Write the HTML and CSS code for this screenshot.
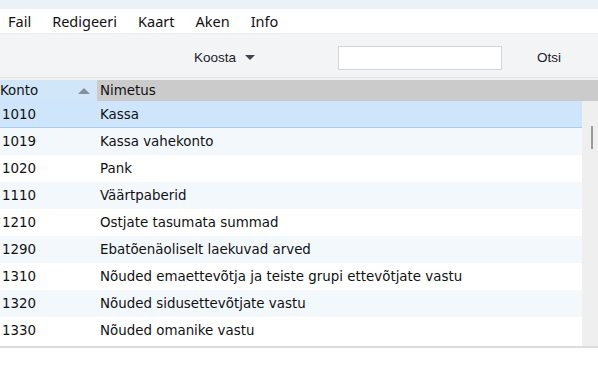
FILE: index.html
```html
<!DOCTYPE html>
<html lang="et">
<head>
  <meta charset="UTF-8">
  <title>Kontoplaan</title>
  <link rel="stylesheet" href="styles.css">
</head>
<body>
  <div class="topband"></div>
  <nav class="menubar">
    <span>Fail</span>
    <span>Redigeeri</span>
    <span>Kaart</span>
    <span>Aken</span>
    <span>Info</span>
  </nav>

  <div class="toolbar">
    <div class="koosta">Koosta <span class="caret"></span></div>
    <input type="text" class="search">
    <div class="otsi">Otsi</div>
  </div>

  <div class="table">
    <div class="thead">
      <div class="th-konto">Konto <span class="sort"></span></div>
      <div class="th-name">Nimetus</div>
    </div>
    <div class="tbody">
      <div class="rows">
        <div class="row selected"><span class="code">1010</span><span class="name">Kassa</span></div>
        <div class="row alt"><span class="code">1019</span><span class="name">Kassa vahekonto</span></div>
        <div class="row"><span class="code">1020</span><span class="name">Pank</span></div>
        <div class="row alt"><span class="code">1110</span><span class="name">Väärtpaberid</span></div>
        <div class="row"><span class="code">1210</span><span class="name">Ostjate tasumata summad</span></div>
        <div class="row alt"><span class="code">1290</span><span class="name">Ebatõenäoliselt laekuvad arved</span></div>
        <div class="row"><span class="code">1310</span><span class="name">Nõuded emaettevõtja ja teiste grupi ettevõtjate vastu</span></div>
        <div class="row alt"><span class="code">1320</span><span class="name">Nõuded sidusettevõtjate vastu</span></div>
        <div class="row"><span class="code">1330</span><span class="name">Nõuded omanike vastu</span></div>
      </div>
      <div class="scrollbar"><div class="thumb"></div></div>
    </div>
  </div>
</body>
</html>
```

FILE: styles.css
```css
body {
  margin: 0;
  padding: 0;
  background: #fff;
  font-family: "DejaVu Sans", sans-serif;
  color: #111;
  overflow: hidden;
}
.topband {
  height: 9px;
  background: #eaf2f8;
}
.menubar {
  height: 24px;
  display: flex;
  align-items: center;
  padding-left: 8px;
  font-family: "Noto Sans", sans-serif;
  font-size: 14.5px;
  color: #111;
}
.menubar span {
  margin-right: 21px;
}
.toolbar {
  height: 45px;
  padding-top: 4px;
  display: flex;
  align-items: center;
  box-sizing: border-box;
  background: #f3f4f6;
  border-top: 1px solid #eceef0;
  border-bottom: 1px solid #e2e3e5;
  font-family: "Liberation Sans", Arial, sans-serif;
  font-size: 13.5px;
  color: #1a1a2a;
}
.koosta {
  margin-left: 194px;
  display: flex;
  align-items: center;
}
.caret {
  display: inline-block;
  margin-left: 9px;
  border-left: 5px solid transparent;
  border-right: 5px solid transparent;
  border-top: 5px solid #3c4450;
}
.search {
  margin-left: 83px;
  width: 164px;
  height: 24px;
  box-sizing: border-box;
  border: 1px solid #d4d4d4;
  background: #fff;
  padding: 0;
}
.otsi {
  margin-left: 35px;
}
.table {
  border-top: 2px solid #f2f2f2;
  border-bottom: 2px solid #dcdcdc;
  font-size: 13.4px;
}
.thead {
  display: flex;
  height: 21px;
  line-height: 21px;
}
.th-konto {
  width: 97px;
  background: #d2e6fa;
  display: flex;
  justify-content: space-between;
  align-items: center;
  padding-right: 7px;
  box-sizing: border-box;
}
.sort {
  border-left: 6px solid transparent;
  border-right: 6px solid transparent;
  border-bottom: 6px solid #8a8f96;
}
.th-name {
  flex: 1;
  background: #cbcbcb;
  padding-left: 3px;
}
.tbody {
  display: flex;
  height: 245px;
}
.rows {
  flex: 1;
}
.row {
  height: 27px;
  display: flex;
  align-items: center;
  box-sizing: border-box;
}
.row.alt {
  background: #f3f8fd;
}
.row.selected {
  background: #cfe5fb;
  border-bottom: 1px solid #a9cdf2;
}
.code {
  width: 100px;
  padding-left: 2px;
  box-sizing: border-box;
}
.scrollbar {
  width: 16px;
  background: #efefef;
  padding-top: 25px;
  box-sizing: border-box;
}
.thumb {
  width: 2px;
  height: 23px;
  margin-left: 9px;
  background: #9a9a9a;
}
```
